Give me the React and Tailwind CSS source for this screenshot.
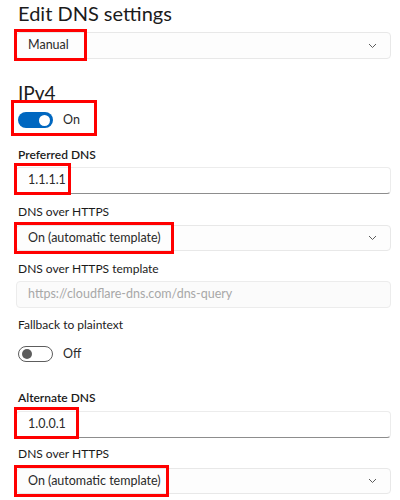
const font = { fontFamily: 'Lato, "Noto Sans", sans-serif' };

const Chevron = () => (
  <svg width="9" height="6" viewBox="0 0 9 6" className="text-[#5c5c5c]">
    <path d="M1 1 L4.5 4.5 L8 1" fill="none" stroke="currentColor" strokeWidth="1" />
  </svg>
);

const Mark = ({ w, h = 32, top = -3 }) => (
  <div
    className="absolute left-[-2px] border-[3px] border-[#ff0000] pointer-events-none"
    style={{ width: w, height: h, top }}
  />
);

const Select = ({ value, mark, h = 27 }) => (
  <div className="relative">
    <div
      className="rounded-[4px] border border-[#e8e8e8] bg-[#fdfdfd] flex items-center justify-between pl-[11px] pr-[13px] text-[12.5px] text-[#2a2a2a]"
      style={{ height: h }}
    >
      <span>{value}</span>
      <Chevron />
    </div>
    {mark && <Mark w={mark} />}
  </div>
);

const Input = ({ value, mark }) => (
  <div className="relative">
    <div className="h-[27px] rounded-[4px] border border-[#ececec] border-b-[#8d8d8d] bg-white flex items-center pl-[11px] text-[12.5px] text-[#2a2a2a]">
      {value}
    </div>
    {mark && <Mark w={mark} top={-4} />}
  </div>
);

const Toggle = ({ on }) =>
  on ? (
    <div className="w-[35px] h-[16px] rounded-full bg-[#0067c0] flex items-center justify-end pr-[3px]">
      <div className="w-[11px] h-[11px] rounded-full bg-white" />
    </div>
  ) : (
    <div className="w-[35px] h-[16px] rounded-full border border-[#5d5d5d] flex items-center pl-[3px]">
      <div className="w-[10px] h-[10px] rounded-full bg-[#5d5d5d]" />
    </div>
  );

const Label = ({ children, bold, className = "" }) => (
  <div className={`text-[12px] leading-[16px] text-[#1b1b1b] pl-[2px] ${bold ? "font-semibold" : ""} ${className}`}>
    {children}
  </div>
);

export default function App() {
  return (
    <div className="w-[400px] h-[500px] bg-white overflow-hidden pl-[16px] pr-[9px]" style={font}>
      <div className="text-[20px] leading-[26px] text-[#1b1b1b] pl-[2px]">Edit DNS settings</div>
      <div className="mt-[6px]">
        <Select value="Manual" mark={73} />
      </div>

      <div className="mt-[22px] text-[19px] leading-[24px] text-[#1b1b1b] pl-[2px]">IPv4</div>
      <div className="relative mt-[7px] h-[16px] flex items-center gap-[10px] pl-[2px]">
        <Toggle on />
        <span className="text-[12.5px] text-[#2a2a2a]">On</span>
        <div className="absolute left-[-5px] top-[-12px] w-[86px] h-[36px] border-[3px] border-[#ff0000]" />
      </div>

      <Label bold className="mt-[19px]">Preferred DNS</Label>
      <div className="mt-[4px]">
        <Input value="1.1.1.1" mark={57} />
      </div>
      <Label className="mt-[10px]">DNS over HTTPS</Label>
      <div className="mt-[5px]">
        <Select value="On (automatic template)" mark={160} h={26} />
      </div>

      <Label className="mt-[10px]">DNS over HTTPS template</Label>
      <div className="mt-[4px] h-[27px] rounded-[4px] border border-[#ececec] bg-[#fbfbfb] flex items-center pl-[11px] text-[12.5px] text-[#a8a8a8]">
        https://cloudflare-dns.com/dns-query
      </div>

      <Label className="mt-[9px]">Fallback to plaintext</Label>
      <div className="mt-[13px] h-[16px] flex items-center gap-[10px] pl-[2px]">
        <Toggle />
        <span className="text-[12.5px] text-[#2a2a2a]">Off</span>
      </div>

      <Label bold className="mt-[28px]">Alternate DNS</Label>
      <div className="mt-[5px]">
        <Input value="1.0.0.1" mark={65} />
      </div>
      <Label className="mt-[8px]">DNS over HTTPS</Label>
      <div className="mt-[6px]">
        <Select value="On (automatic template)" mark={155} h={26} />
      </div>
    </div>
  );
}
